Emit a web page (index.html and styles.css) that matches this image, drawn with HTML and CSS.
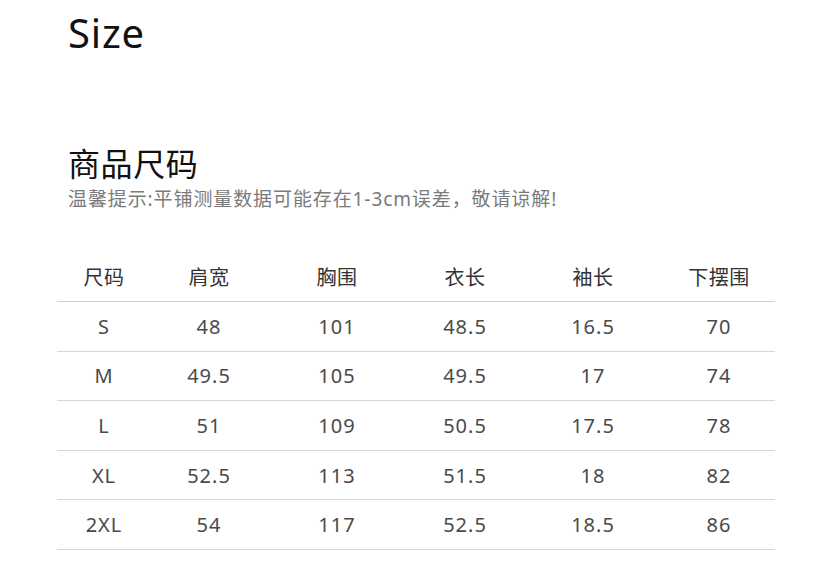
FILE: index.html
```html
<!DOCTYPE html>
<html lang="zh">
<head>
<meta charset="utf-8">
<link rel="stylesheet" href="styles.css">
</head>
<body>
<div class="page">
  <h1 class="title">Size</h1>
  <h2 class="subtitle">商品尺码</h2>
  <p class="note">温馨提示:平铺测量数据可能存在1-3cm误差，敬请谅解!</p>
  <div class="table">
    <div class="row head">
      <span>尺码</span><span>肩宽</span><span>胸围</span><span>衣长</span><span>袖长</span><span>下摆围</span>
    </div>
    <div class="row">
      <span>S</span><span>48</span><span>101</span><span>48.5</span><span>16.5</span><span>70</span>
    </div>
    <div class="row">
      <span>M</span><span>49.5</span><span>105</span><span>49.5</span><span>17</span><span>74</span>
    </div>
    <div class="row">
      <span>L</span><span>51</span><span>109</span><span>50.5</span><span>17.5</span><span>78</span>
    </div>
    <div class="row">
      <span>XL</span><span>52.5</span><span>113</span><span>51.5</span><span>18</span><span>82</span>
    </div>
    <div class="row">
      <span>2XL</span><span>54</span><span>117</span><span>52.5</span><span>18.5</span><span>86</span>
    </div>
  </div>
</div>
</body>
</html>
```

FILE: styles.css
```css
* { box-sizing: border-box; }
html, body { margin: 0; padding: 0; background: #fff; }
body {
  font-family: "Noto Sans", "Noto Sans CJK SC", sans-serif;
  color: #222;
}
.page {
  width: 826px;
  height: 567px;
  overflow: hidden;
  padding: 0 51px 0 57px;
}
.title {
  margin: 0;
  padding: 3px 0 0 11px;
  font-family: "Noto Sans", sans-serif;
  font-weight: 400;
  font-size: 40px;
  line-height: 60px;
  color: #111;
  letter-spacing: 0.8px;
}
.subtitle {
  margin: 0;
  padding: 77px 0 0 11px;
  font-family: "Noto Sans CJK SC", sans-serif;
  font-weight: 400;
  font-size: 32px;
  line-height: 44px;
  color: #111;
  letter-spacing: 0.6px;
}
.note {
  margin: 0;
  padding: 2px 0 0 11px;
  font-family: "Noto Sans", "Noto Sans CJK SC", sans-serif;
  font-size: 19px;
  line-height: 26px;
  color: #7a7a7a;
  letter-spacing: 0.9px;
}
.table {
  margin-top: 40px;
  width: 718px;
}
.row {
  display: grid;
  grid-template-columns: 94px 116px 140px 116px 140px 112px;
  height: 49.6px;
  align-items: center;
  border-bottom: 1.5px solid #d6d6d6;
  font-size: 20px;
  color: #4a4a4a;
  letter-spacing: 1px;
}
.row.head {
  height: 50px;
  border-bottom-color: #cfcfcf;
}
.row span {
  text-align: center;
}
.head span {
  font-family: "Noto Sans CJK SC", sans-serif;
  font-size: 20px;
  color: #333;
  letter-spacing: 0.5px;
}
```
